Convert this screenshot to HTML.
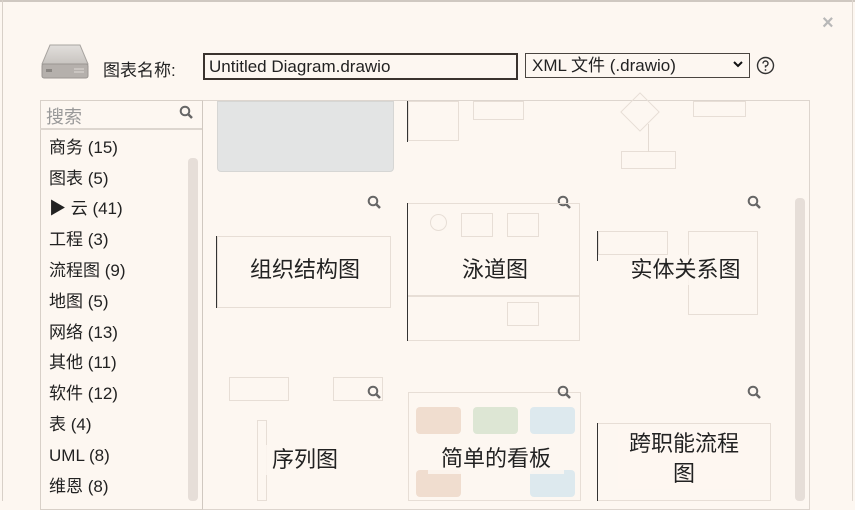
<!DOCTYPE html>
<html><head><meta charset="utf-8"><style>
*{margin:0;padding:0;box-sizing:border-box}
body{width:855px;height:501px;overflow:hidden;background:#fdf7f1;position:relative;font-family:"Liberation Sans","Noto Sans CJK SC",sans-serif;color:#222}
.a{position:absolute}
.lst div{position:absolute;left:49px;font-size:17px;line-height:20px;color:#222}
.mag{position:absolute;width:16px;height:16px}
.lbl{position:absolute;font-size:22px;color:#222;background:rgba(253,247,241,.85);text-align:center;line-height:30px}
.fb{position:absolute;border:1px solid #e7ded6}
</style></head><body>
<div class="a" style="left:0;top:0;width:855px;height:2px;background:#cfc8c1"></div>
<div class="a" style="left:2px;top:0;width:1px;height:501px;background:#d8d0c8"></div>
<div class="a" style="left:852px;top:0;width:1px;height:501px;background:#e0d8d0"></div>
<div class="a" style="left:822px;top:12px;font-size:20px;color:#b8b8b8;font-weight:bold">×</div>
<svg class="a" style="left:40px;top:43px" width="50" height="37">
<defs><linearGradient id="g1" x1="0" y1="0" x2="0" y2="1"><stop offset="0" stop-color="#e2dfdc"/><stop offset="1" stop-color="#c8c4c0"/></linearGradient></defs>
<path d="M10 2 H40 L48 21 H2 Z" fill="url(#g1)" stroke="#a8a4a0"/>
<rect x="2" y="21" width="46" height="14" rx="2" fill="#b5b0ac" stroke="#9a9692"/>
<rect x="6" y="26" width="6" height="3" fill="#8a8682"/>
<path d="M34 26h10M34 29h10" stroke="#dedad6"/>
</svg>
<div class="a" style="left:103px;top:56px;font-size:17px">图表名称:</div>
<div class="a" style="left:203px;top:53px;width:315px;height:27px;border:2px solid #3a332e;background:#fdf7f1;font-size:17px;line-height:23px;padding-left:4px">Untitled Diagram.drawio</div>
<div class="a" style="left:525px;top:53px;width:225px;height:25px;border:1px solid #4a4540;font-size:17px;line-height:23px;padding-left:6px">XML 文件 (.drawio)</div>
<svg class="a" style="left:733px;top:61px" width="10" height="8"><path d="M1 1 L5 5 L9 1" stroke="#111" stroke-width="2" fill="none"/></svg>
<svg class="a" style="left:756px;top:56px" width="19" height="19"><circle cx="9.5" cy="9.5" r="8" stroke="#333" stroke-width="1.4" fill="none"/><path d="M7 7.5 A2.5 2.5 0 1 1 9.5 10 V11.5" stroke="#333" stroke-width="1.4" fill="none"/><circle cx="9.5" cy="14" r="0.9" fill="#333"/></svg>
<div class="a" style="left:40px;top:100px;width:163px;height:410px;border:1px solid #d8d0c8"></div>
<div class="a" style="left:40px;top:128px;width:163px;height:2px;background:#ddd6cf"></div>
<div class="a" style="left:46px;top:103px;font-size:18px;color:#999">搜索</div>
<svg class="mag" style="left:179px;top:105px"><circle cx="6" cy="6" r="4.3" stroke="#666" stroke-width="2" fill="none"/><path d="M9 9 L13 13" stroke="#666" stroke-width="2.5"/></svg>
<div class="a" style="left:188px;top:158px;width:10px;height:343px;background:#e6ded8;border-radius:4px"></div>
<div class="lst">
<div style="top:138px">商务 (15)</div>
<div style="top:169px">图表 (5)</div>
<div style="top:199px">▶ 云 (41)</div>
<div style="top:230px">工程 (3)</div>
<div style="top:261px">流程图 (9)</div>
<div style="top:292px">地图 (5)</div>
<div style="top:323px">网络 (13)</div>
<div style="top:353px">其他 (11)</div>
<div style="top:384px">软件 (12)</div>
<div style="top:415px">表 (4)</div>
<div style="top:446px">UML (8)</div>
<div style="top:477px">维恩 (8)</div>
</div>
<div class="a" style="left:202px;top:100px;width:608px;height:410px;border:1px solid #ddd5ce;border-left:1px solid #d0c8c0"></div>
<div class="a" style="left:795px;top:198px;width:10px;height:303px;background:#e6ded8;border-radius:4px"></div>
<div class="a" style="left:217px;top:101px;width:177px;height:71px;background:#e3e4e4;border:1px solid #d6d6d4;border-radius:0 0 4px 4px"></div>
<div class="a" style="left:407px;top:101px;width:1px;height:41px;background:#333"></div>
<div class="fb" style="left:408px;top:101px;width:51px;height:40px"></div>
<div class="fb" style="left:473px;top:101px;width:51px;height:19px"></div>
<div class="fb" style="left:626px;top:98px;width:28px;height:28px;transform:rotate(45deg)"></div>
<div class="fb" style="left:693px;top:101px;width:53px;height:16px"></div>
<div class="fb" style="left:621px;top:151px;width:55px;height:18px"></div>
<div class="a" style="left:648px;top:124px;width:1px;height:28px;background:#e4dbd3"></div>
<svg class="mag" style="left:367px;top:195px"><circle cx="6" cy="6" r="4.3" stroke="#666" stroke-width="2" fill="none"/><path d="M9 9 L13 13" stroke="#666" stroke-width="2.5"/></svg>
<svg class="mag" style="left:557px;top:195px"><circle cx="6" cy="6" r="4.3" stroke="#666" stroke-width="2" fill="none"/><path d="M9 9 L13 13" stroke="#666" stroke-width="2.5"/></svg>
<svg class="mag" style="left:747px;top:195px"><circle cx="6" cy="6" r="4.3" stroke="#666" stroke-width="2" fill="none"/><path d="M9 9 L13 13" stroke="#666" stroke-width="2.5"/></svg>
<div class="fb" style="left:217px;top:236px;width:174px;height:72px"></div>
<div class="a" style="left:216px;top:236px;width:1px;height:72px;background:#333"></div>
<div class="fb" style="left:407px;top:203px;width:173px;height:138px"></div>
<div class="a" style="left:407px;top:203px;width:1px;height:138px;background:#333"></div>
<div class="fb" style="left:408px;top:295px;width:172px;height:1px"></div>
<div class="fb" style="left:430px;top:214px;width:17px;height:17px;border-radius:50%"></div>
<div class="fb" style="left:461px;top:213px;width:32px;height:24px"></div>
<div class="fb" style="left:507px;top:213px;width:32px;height:24px"></div>
<div class="fb" style="left:507px;top:302px;width:32px;height:24px"></div>
<div class="a" style="left:597px;top:231px;width:1px;height:30px;background:#333"></div>
<div class="fb" style="left:598px;top:231px;width:70px;height:24px"></div>
<div class="fb" style="left:688px;top:231px;width:70px;height:84px"></div>
<div class="lbl" style="left:238px;top:255px;width:134px">组织结构图</div>
<div class="lbl" style="left:425px;top:255px;width:140px">泳道图</div>
<div class="lbl" style="left:616px;top:255px;width:139px">实体关系图</div>
<div class="fb" style="left:229px;top:377px;width:60px;height:24px"></div>
<div class="fb" style="left:333px;top:377px;width:50px;height:24px"></div>
<div class="fb" style="left:257px;top:420px;width:10px;height:81px"></div>
<div class="fb" style="left:408px;top:392px;width:173px;height:109px"></div>
<div class="a" style="left:416px;top:407px;width:45px;height:27px;background:#f0ddcf;border-radius:4px"></div>
<div class="a" style="left:473px;top:407px;width:45px;height:27px;background:#dde6d4;border-radius:4px"></div>
<div class="a" style="left:530px;top:407px;width:45px;height:27px;background:#dde9ee;border-radius:4px"></div>
<div class="a" style="left:416px;top:470px;width:45px;height:27px;background:#f0ddcf;border-radius:4px"></div>
<div class="a" style="left:530px;top:470px;width:45px;height:27px;background:#dde9ee;border-radius:4px"></div>
<div class="fb" style="left:597px;top:423px;width:174px;height:78px"></div>
<div class="a" style="left:597px;top:423px;width:1px;height:78px;background:#333"></div>
<svg class="mag" style="left:367px;top:385px"><circle cx="6" cy="6" r="4.3" stroke="#666" stroke-width="2" fill="none"/><path d="M9 9 L13 13" stroke="#666" stroke-width="2.5"/></svg>
<svg class="mag" style="left:557px;top:385px"><circle cx="6" cy="6" r="4.3" stroke="#666" stroke-width="2" fill="none"/><path d="M9 9 L13 13" stroke="#666" stroke-width="2.5"/></svg>
<svg class="mag" style="left:747px;top:385px"><circle cx="6" cy="6" r="4.3" stroke="#666" stroke-width="2" fill="none"/><path d="M9 9 L13 13" stroke="#666" stroke-width="2.5"/></svg>
<div class="lbl" style="left:261px;top:445px;width:88px">序列图</div>
<div class="lbl" style="left:428px;top:444px;width:136px">简单的看板</div>
<div class="lbl" style="left:618px;top:429px;width:132px;background:rgba(253,247,241,.7)">跨职能流程<br>图</div>
</body></html>
